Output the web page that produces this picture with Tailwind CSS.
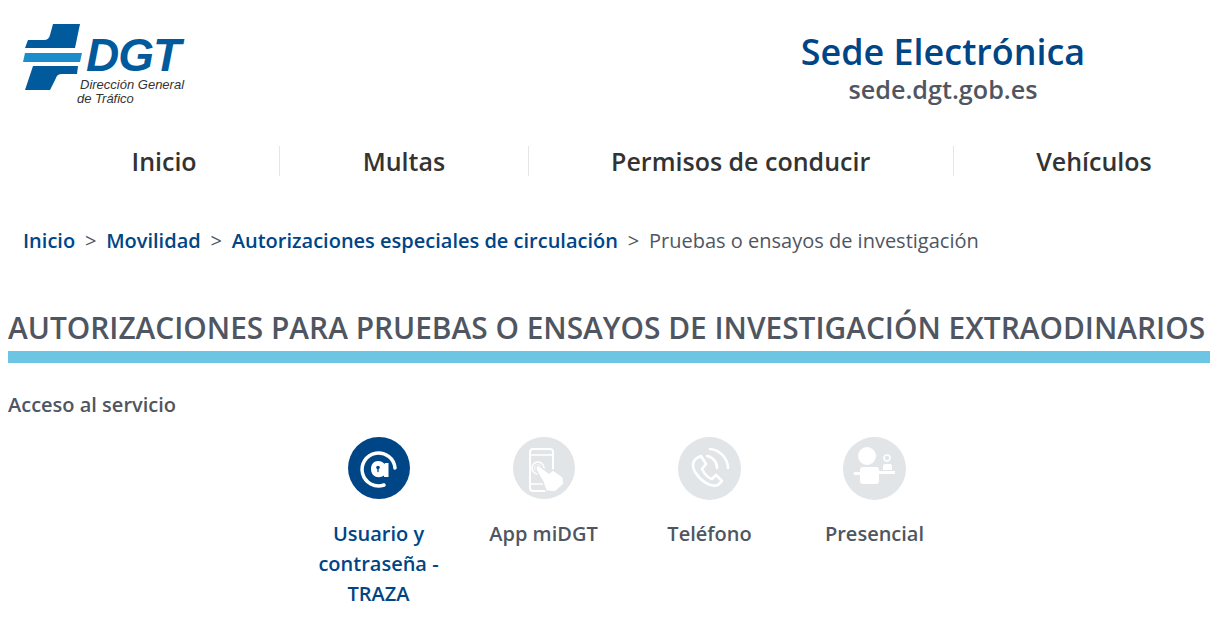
<!DOCTYPE html>
<html lang="es">
<head>
    <meta charset="UTF-8">
    <title>Autorizaciones para pruebas o ensayos de investigación</title>
    <script src="https://cdn.jsdelivr.net/npm/@tailwindcss/browser@4"></script>
</head>
<body class="bg-white font-['Open_Sans',sans-serif] overflow-hidden">
    <!-- Header -->
    <header class="flex h-[146px]">
        <div class="relative w-[200px] h-[120px] shrink-0">
            <svg class="absolute left-0 top-0" width="90" height="100" viewBox="0 0 90 100">
                <path fill="#005a9c" d="M53 24H80L75 48H25L28 40H44Q49 40 50 35Z"/>
                <path fill="#1d8ccb" d="M25 53H82L80 62H23Z"/>
                <path fill="#005a9c" d="M33 66H78L77 74H62Q57 74 56 78L50 90H25Z"/>
            </svg>
            <span class="absolute left-[86px] top-[34px] font-['Liberation_Sans',sans-serif] italic font-bold text-[46px] leading-[42px] text-[#005a9c] tracking-[-1px]">DGT</span>
            <span class="absolute left-[77px] top-[78px] font-['Liberation_Sans',sans-serif] italic text-[13px] leading-[14px] text-[#333] whitespace-nowrap"><span class="pl-[3px]">Dirección General</span><br>de Tráfico</span>
        </div>
        <div class="ml-[586px] w-[314px] pt-[32px] text-center">
            <div class="text-[35.900px] leading-[40px] font-semibold text-[#004586] whitespace-nowrap">Sede Electrónica</div>
            <div class="text-[25.200px] leading-[35px] font-semibold text-[#4f5661] whitespace-nowrap">sede.dgt.gob.es</div>
        </div>
    </header>

    <!-- Nav -->
    <nav class="flex ml-[49px] h-[30px] text-[25px] leading-[30px] font-semibold text-[#333] whitespace-nowrap">
        <a class="px-[82.500px] border-r border-[#e4e6e8]">Inicio</a>
        <a class="px-[82.500px] border-r border-[#e4e6e8]">Multas</a>
        <a class="px-[82.500px] border-r border-[#e4e6e8]">Permisos de conducir</a>
        <a class="pl-[82.500px]">Vehículos</a>
    </nav>

    <!-- Breadcrumb -->
    <div class="flex gap-[9.800px] ml-[23px] mt-[52px] text-[20px] leading-[26px] text-[#4f5661] whitespace-nowrap">
        <a class="font-semibold text-[#004586]">Inicio</a><span>&gt;</span>
        <a class="font-semibold text-[#004586]">Movilidad</a><span>&gt;</span>
        <a class="font-semibold text-[#004586]">Autorizaciones especiales de circulación</a><span>&gt;</span>
        <span>Pruebas o ensayos de investigación</span>
    </div>

    <!-- Title -->
    <div class="ml-2 mt-[54px]">
        <h1 class="text-[29.850px] leading-[40px] font-semibold text-[#4f5661] uppercase whitespace-nowrap border-b-[12px] border-[#6bc5e3] h-[55px]">Autorizaciones para pruebas o ensayos de investigación extraodinarios</h1>
        <p class="mt-[29px] text-[20px] leading-[26px] font-semibold text-[#4f5661]">Acceso al servicio</p>
    </div>

    <!-- Access options -->
    <div class="flex ml-[296px] mt-[19px] text-[20px] leading-[30px] font-semibold text-center text-[#4f5661]">
        <div class="w-[165px] px-[20px]">
            <svg class="mx-auto" width="62" height="62" viewBox="8 7 62 62" fill="none" stroke-linecap="round">
                <circle cx="39" cy="38" r="31" fill="#004586"/>
                <path stroke="#fff" stroke-width="3.500" d="M55 38A16.500 16.500 0 1 0 44 55"/>
                <path fill="#fff" d="M38 31C41 31 43 32 44.500 34L45 33H48.500V47H44V45.500C39 49 31 47 31 39C31 34 34 31 38 31Z"/>
                <circle cx="38" cy="37.500" r="1.800" fill="#004586"/>
                <path stroke="#004586" stroke-width="1.300" d="M38 38V41.500"/>
            </svg>
            <p class="mt-[20px] text-[#004586]">Usuario y contraseña - TRAZA</p>
        </div>
        <div class="w-[165px]">
            <svg class="mx-auto" width="62" height="62" viewBox="8 7 62 62" fill="none" stroke="#fff">
                <circle cx="39" cy="38" r="31" fill="#e1e5e8" stroke="none"/>
                <rect x="25" y="19" width="23" height="42" rx="3" stroke-width="2"/>
                <path stroke-width="1.500" d="M25 25H48M25 54H48"/>
                <circle cx="33" cy="38" r="6" stroke-width="1.500"/>
                <circle cx="33" cy="38" r="3" stroke-width="1.500"/>
                <path fill="#fff" stroke="#e1e5e8" stroke-width="1.500" d="M31 36L33 35L44 43L48 40L58 47L59 54L50 62L41 61L38 52L31 40Z"/>
            </svg>
            <p class="mt-[20px]">App miDGT</p>
        </div>
        <div class="w-[165px] ml-[1px]">
            <svg class="mx-auto" width="63" height="63" viewBox="18 12 63 63" fill="none" stroke="#fff" stroke-linecap="round" stroke-linejoin="round">
                <circle cx="49.500" cy="43.500" r="31.500" fill="#e1e5e8" stroke="none"/>
                <path stroke-width="2.600" d="M37 33L41 31L46 39L42 44C44 48 48 53 52 54L56 50L62 56L58 60C50 63 40 55 35 47C32 42 32 36 37 33Z"/>
                <path stroke-width="2.600" d="M47 31A12 12 0 0 1 57 43"/>
                <path stroke-width="2.600" d="M50 24A20 20 0 0 1 68 43"/>
            </svg>
            <p class="mt-[19px]">Teléfono</p>
        </div>
        <div class="w-[165px]">
            <svg class="mx-auto" width="63" height="63" viewBox="183 12 63 63" fill="#fff">
                <circle cx="214.500" cy="43.500" r="31.500" fill="#e1e5e8"/>
                <circle cx="207" cy="31" r="9"/>
                <path d="M203 42H216A3 3 0 0 1 219 45V46H235V49H219V56A3 3 0 0 1 216 59H203A3 3 0 0 1 200 56V50H195A1.500 1.500 0 0 1 195 47H200V45A3 3 0 0 1 203 42Z"/>
                <circle cx="227" cy="33" r="3" fill="none" stroke="#fff" stroke-width="1.500"/>
                <path d="M223 45V41A2 2 0 0 1 225 39H230A2 2 0 0 1 232 41V45Z"/>
            </svg>
            <p class="mt-[19px]">Presencial</p>
        </div>
    </div>
</body>
</html>
